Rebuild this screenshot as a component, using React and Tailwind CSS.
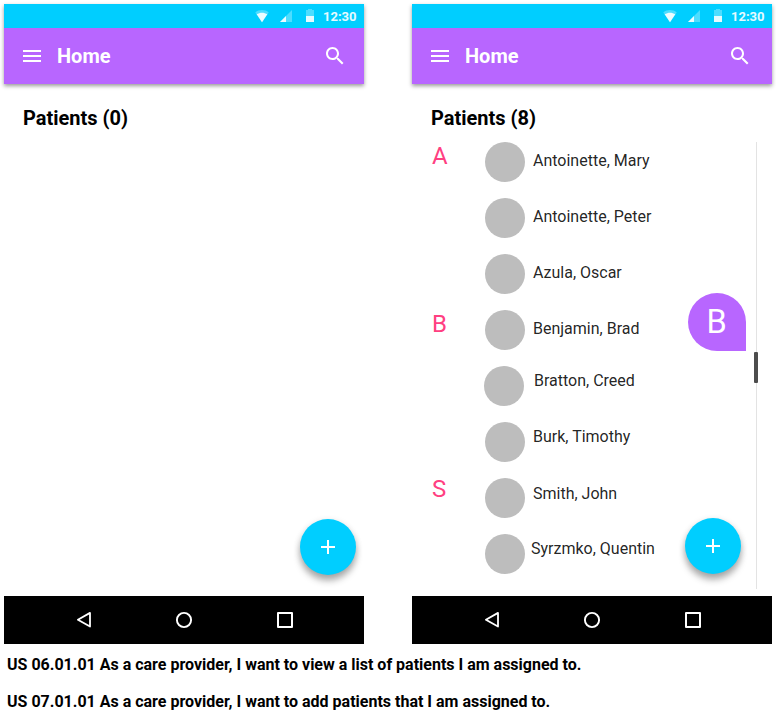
import React from "react";

function StatusBar() {
  return (
    <div className="flex h-6 items-center bg-[#00ceff] pl-[251px] text-white">
      <svg className="h-6 w-[18px] shrink-0" viewBox="0 0 18 24" fill="currentColor">
        <path opacity=".3" d="M7 18.2 L0.3 8.4 C4 5.2 10 5.2 13.7 8.4 Z" />
        <path opacity=".9" d="M7 18.2 L1.7 10.3 C4.8 8.2 9.2 8.2 12.3 10.3 Z" />
      </svg>
      <svg className="ml-[7px] h-6 w-3 shrink-0" viewBox="0 0 12 24" fill="currentColor">
        <path opacity=".3" d="M0 18 L12 6 V18 Z" />
        <path opacity=".9" d="M0 18 L6 12 V18 Z" />
      </svg>
      <svg className="ml-[14px] h-6 w-2 shrink-0" viewBox="0 0 8 24" fill="currentColor">
        <path opacity=".3" d="M0 6 H2 V5 H6 V6 H8 V12 H0 Z" />
        <path opacity=".9" d="M0 12 H8 V18 H0 Z" />
      </svg>
      <span className="ml-[9px] pt-px text-[13px] leading-6 font-bold text-white/90">12:30</span>
    </div>
  );
}

function AppBar({ searchClass }) {
  return (
    <header className="shadow-[0_2px_4px_rgba(0,0,0,0.4)]">
      <StatusBar />
      <div className={"flex h-14 items-center bg-[#b866ff] pl-4 text-white " + searchClass}>
        <svg className="size-6" viewBox="0 0 24 24" fill="currentColor">
          <path d="M3 18h18v-2H3v2zm0-5h18v-2H3v2zm0-7v2h18V6H3z" />
        </svg>
        <h1 className="ml-[13px] text-[20px] leading-7 font-bold text-white">Home</h1>
        <svg className="ml-auto size-6" viewBox="0 0 24 24" fill="currentColor">
          <path d="M15.5 14h-.79l-.28-.27C15.41 12.59 16 11.11 16 9.5 16 5.91 13.09 3 9.5 3S3 5.91 3 9.5 5.91 16 9.5 16c1.61 0 3.09-.59 4.23-1.57l.27.28v.79l5 4.99L20.49 19l-4.99-5zm-6 0C7.01 14 5 11.99 5 9.5S7.01 5 9.5 5 14 7.01 14 9.5 11.99 14 9.5 14z" />
        </svg>
      </div>
    </header>
  );
}

function NavBar() {
  return (
    <nav className="flex h-12 items-center bg-black pl-[68px] text-white">
      <svg className="size-6" viewBox="0 0 24 24" fill="none" stroke="currentColor" strokeWidth="1.8" strokeLinejoin="round">
        <path d="M18 4.9V18.5L5.9 11.7Z" />
      </svg>
      <svg className="ml-[76px] size-6" viewBox="0 0 24 24" fill="none" stroke="currentColor" strokeWidth="1.9">
        <circle cx="12" cy="12" r="7.1" />
      </svg>
      <svg className="ml-[77px] size-6" viewBox="0 0 24 24" fill="none" stroke="currentColor" strokeWidth="2" strokeLinejoin="round">
        <path d="M5 5h14v14H5z" />
      </svg>
    </nav>
  );
}

function AddButton({ place }) {
  return (
    <button
      aria-label="Add patient"
      className={"absolute flex size-14 items-center justify-center rounded-full bg-[#00ceff] text-white shadow-[0_6px_7px_rgba(0,0,0,0.28),0_2px_7px_rgba(0,0,0,0.14)] " + place}
    >
      <svg className="size-6" viewBox="0 0 24 24" fill="currentColor">
        <path d="M19 13h-6v6h-2v-6H5v-2h6V5h2v6h6v2z" />
      </svg>
    </button>
  );
}

const patients = [
  { letter: "A", name: "Antoinette, Mary", text: "pt-[7px] pl-2", dot: "ml-[52px]" },
  { name: "Antoinette, Peter", text: "pt-[7px] pl-2", dot: "ml-[52px]" },
  { name: "Azula, Oscar", text: "pt-[7px] pl-2", dot: "ml-[52px]" },
  { letter: "B", name: "Benjamin, Brad", text: "pt-[7px] pl-2", dot: "ml-[52px]" },
  { name: "Bratton, Creed", text: "pt-[3px] pl-[10px]", dot: "ml-[51px]" },
  { name: "Burk, Timothy", text: "pt-[3px] pl-2", dot: "ml-[52px]" },
  { letter: "S", name: "Smith, John", text: "pt-[4px] pl-2", dot: "ml-[52px]", up: true },
  { name: "Syrzmko, Quentin", text: "pt-[3px] pl-[6px]", dot: "ml-[52px]" },
];

function PatientList() {
  return (
    <ul className="w-[325px] pt-px pl-[1px]">
      {patients.map((p) => (
        <li key={p.name} className="flex h-14 items-start">
          <span className={"w-[1px] overflow-visible text-[24px] leading-7 text-[#ff4081] " + (p.up ? "-mt-[3px]" : "")}>
            {p.letter}
          </span>
          <span className={"size-10 shrink-0 rounded-full bg-[#bdbdbd] " + p.dot} />
          <span className={"text-[16px] leading-6 whitespace-nowrap text-black/87 " + p.text}>{p.name}</span>
        </li>
      ))}
    </ul>
  );
}

function Phone({ title, searchClass, fab, children }) {
  return (
    <section className="relative flex h-[640px] w-[360px] flex-col">
      <AppBar searchClass={searchClass} />
      <div className="flex-1 pt-5 pl-[19px]">
        <h2 className="h-[37px] text-[20px] leading-7 font-bold text-black">{title}</h2>
        {children}
      </div>
      <NavBar />
      <AddButton place={fab} />
    </section>
  );
}

export default function App() {
  return (
    <main className="h-[712px] w-[776px] overflow-hidden bg-white pt-1 pl-1 font-[Roboto,sans-serif]">
      <div className="flex gap-12">
        <Phone title="Patients (0)" searchClass="pr-[17px]" fab="top-[515px] left-[296px]" />
        <Phone title="Patients (8)" searchClass="pr-5" fab="top-[514px] left-[273px]">
          <div className="flex">
            <PatientList />
            <div className="mt-px h-[447px] w-px bg-[#e3e3e3]" />
          </div>
          <div className="absolute top-[289px] left-[276px] flex size-[58px] items-center justify-center rounded-full rounded-br-none bg-[#b866ff] pr-px text-[32.5px] font-normal text-white">
            B
          </div>
          <div className="absolute top-[348px] left-[342px] h-[31px] w-1 rounded-[1px] bg-[#4d4d4d]" />
        </Phone>
      </div>
      <div className="flex flex-col gap-[13px] pt-[9px] pl-[3px] text-[16px] leading-6 font-bold text-black">
        <p>US 06.01.01 As a care provider, I want to view a list of patients I am assigned to.</p>
        <p>US 07.01.01 As a care provider, I want to add patients that I am assigned to.</p>
      </div>
    </main>
  );
}
